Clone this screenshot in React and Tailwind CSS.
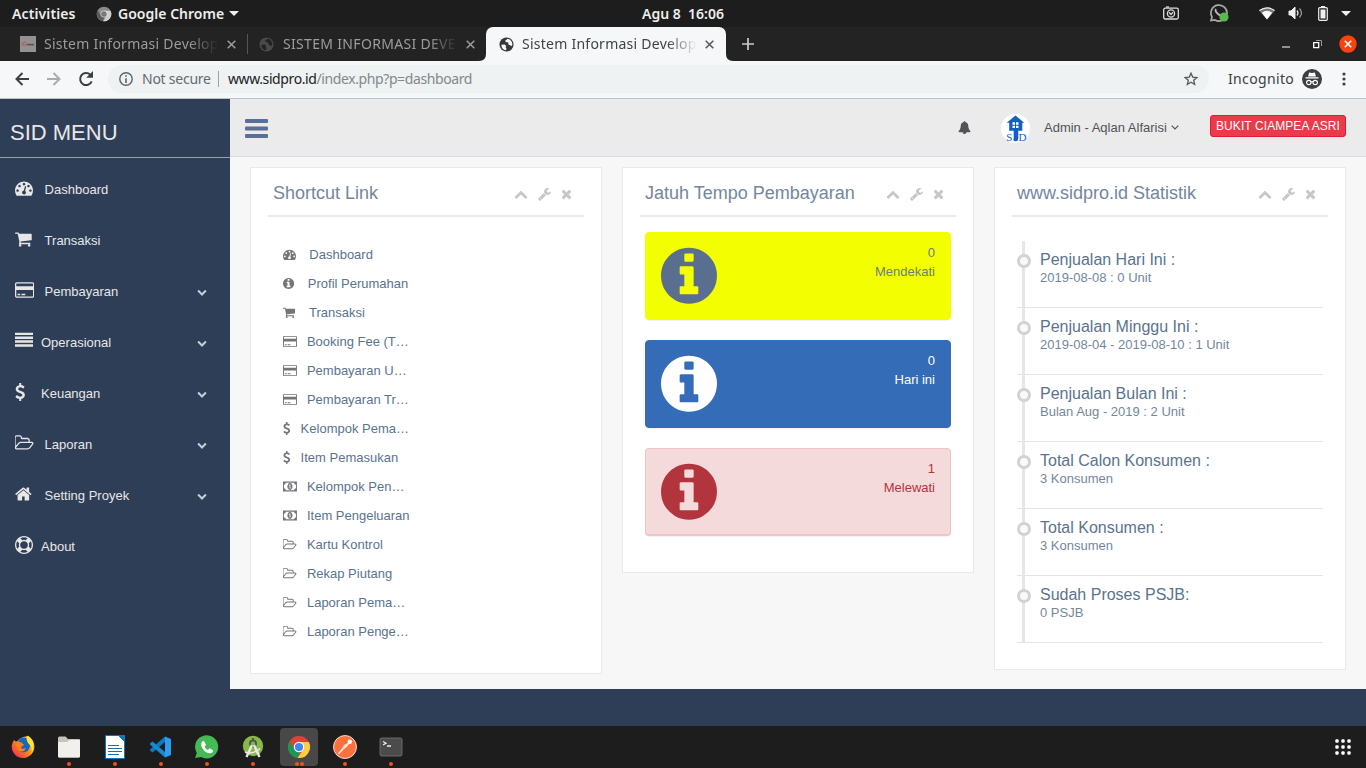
import React from "react";

const DASH = "M384 1152q0-53-37.5-90.5t-90.5-37.5-90.5 37.5-37.5 90.5 37.5 90.5 90.5 37.5 90.5-37.5 37.5-90.5zm192-448q0-53-37.5-90.5t-90.5-37.5-90.5 37.5-37.5 90.5 37.5 90.5 90.5 37.5 90.5-37.5 37.5-90.5zm428 481l101-382q6-26-7.5-48.5t-38.5-29.5-48 6.5-30 39.5l-101 382q-60 5-107 43.5t-63 98.5q-20 77 20 146t117 89 146-20 89-117q16-60-6-117t-72-91zm660-33q0-53-37.5-90.5t-90.5-37.5-90.5 37.5-37.5 90.5 37.5 90.5 90.5 37.5 90.5-37.5 37.5-90.5zm-640-640q0-53-37.5-90.5t-90.5-37.5-90.5 37.5-37.5 90.5 37.5 90.5 90.5 37.5 90.5-37.5 37.5-90.5zm448 192q0-53-37.5-90.5t-90.5-37.5-90.5 37.5-37.5 90.5 37.5 90.5 90.5 37.5 90.5-37.5 37.5-90.5zm320 448q0 261-141 483-19 29-54 29h-1402q-35 0-54-29-141-221-141-483 0-182 71-348t191-286 286-191 348-71 348 71 286 191 191 286 71 348z";
const INFO = "M1152 1376v-160q0-14-9-23t-23-9h-96v-512q0-14-9-23t-23-9h-320q-14 0-23 9t-9 23v160q0 14 9 23t23 9h96v320h-96q-14 0-23 9t-9 23v160q0 14 9 23t23 9h448q14 0 23-9t9-23zm-128-896v-160q0-14-9-23t-23-9h-192q-14 0-23 9t-9 23v160q0 14 9 23t23 9h192q14 0 23-9t9-23zm640 416q0 209-103 385.5t-279.5 279.5-385.5 103-385.5-103-279.5-279.5-103-385.5 103-385.5 279.5-279.5 385.5-103 385.5 103 279.5 279.5 103 385.5z";
const CART = "M704 1536q0 52-38 90t-90 38-90-38-38-90 38-90 90-38 90 38 38 90zm896 0q0 52-38 90t-90 38-90-38-38-90 38-90 90-38 90 38 38 90zm128-1088v512q0 24-16.5 42.5t-40.5 21.5l-1044 122q13 60 13 70 0 16-24 64h920q26 0 45 19t19 45-19 45-45 19h-1024q-26 0-45-19t-19-45q0-11 8-31.5t16-36 21.5-40 15.5-29.5l-177-823h-204q-26 0-45-19t-19-45 19-45 45-19h256q16 0 28.5 6.5t19.5 15.5 13 24.5 8 26 5.5 29.5 4.5 26h1201q26 0 45 19t19 45z";
const CARD = "M1760 128q66 0 113 47t47 113v1216q0 66-47 113t-113 47h-1600q-66 0-113-47t-47-113v-1216q0-66 47-113t113-47h1600zm-1600 128q-13 0-22.5 9.5t-9.5 22.5v224h1664v-224q0-13-9.5-22.5t-22.5-9.5h-1600zm1600 1280q13 0 22.5-9.5t9.5-22.5v-608h-1664v608q0 13 9.5 22.5t22.5 9.500h1600zm-1504-128v-128h256v128h-256zm384 0v-128h384v128h-384z";
const USD = "M1362 1185q0 153-99.5 263.5t-258.5 136.5v175q0 14-9 23t-23 9h-135q-13 0-22.5-9.5t-9.5-22.5v-175q-66-9-127.5-31t-101.5-44.5-74-48-46.5-37.5-17.5-18q-17-21-2-41l103-135q7-10 23-12 15-2 24 9l2 2q113 99 243 125 37 8 74 8 81 0 142.5-43t61.5-122q0-28-15-53t-33.5-42-58.5-37.5-66-32-80-32.5q-39-16-61.5-25t-61.5-26.5-62.5-31-56.5-35.5-53.5-42.5-43.5-49-35.5-58-21-66.5-8.5-78q0-138 98-242t255-134v-180q0-13 9.5-22.5t22.5-9.5h135q14 0 23 9t9 23v176q57 6 110.5 23t87 33.5 63.5 37.5 39 29 15 14q17 18 5 38l-81 146q-8 15-23 16-14 3-27-7-3-3-14.5-12t-39-26.5-58.5-32-74.5-26-85.5-11.5q-95 0-155 43t-60 111q0 26 8.5 48t29.5 41.5 39.5 33 56 31 60.5 27 70 27.5q53 20 81 31.5t76 35 75.5 42.5 62 50 53 63.5 31.5 76.5 13 94z";
const FOLDER = "M1717 931q0-35-53-35h-1088q-40 0-85.5 21.5t-71.5 52.5l-294 363q-18 24-18 40 0 35 53 35h1088q40 0 86-22t71-53l294-363q18-22 18-39zm-1141-163h768v-160q0-40-28-68t-68-28h-576q-40 0-68-28t-28-68v-64q0-40-28-68t-68-28h-320q-40 0-68 28t-28 68v853l256-315q44-53 116-87.5t140-34.5zm1269 163q0 62-46 120l-295 363q-43 53-116 87.5t-140 34.5h-1088q-92 0-158-66t-66-158v-960q0-92 66-158t158-66h320q92 0 158 66t66 158v32h544q92 0 158 66t66 158v160h192q54 0 99 24.5t67 70.5q15 32 15 68z";
const HOME = "M1472 992v480q0 26-19 45t-45 19h-384v-384h-256v384h-384q-26 0-45-19t-19-45v-480q0-1 .5-3t.5-3l575-474 575 474q1 2 1 6zm223-69l-62 74q-8 9-21 11h-3q-13 0-21-7l-692-577-692 577q-12 8-24 7-13-2-21-11l-62-74q-8-10-7-23.5t11-21.5l719-599q32-26 76-26t76 26l244 204v-195q0-14 9-23t23-9h192q14 0 23 9t9 23v408l219 182q10 8 11 21.5t-7 23.5z";
const RING = "M896 0q182 0 348 71t286 191 191 286 71 348-71 348-191 286-286 191-348 71-348-71-286-191-191-286-71-348 71-348 191-286 286-191 348-71zm0 128q-190 0-361 90l194 194q82-28 167-28t167 28l194-194q-171-90-361-90zm-678 1129l194-194q-28-82-28-167t28-167l-194-194q-90 171-90 361t90 361zm678 407q190 0 361-90l-194-194q-82 28-167 28t-167-28l-194 194q171 90 361 90zm0-384q159 0 271.5-112.5t112.5-271.5-112.5-271.5-271.5-112.5-271.5 112.5-112.5 271.5 112.5 271.5 271.5 112.5zm484-217l194 194q90-171 90-361t-90-361l-194 194q28 82 28 167t-28 167z";
const DOWN = "M1683 808l-742 741q-19 19-45 19t-45-19l-742-741q-19-19-19-45.5t19-45.5l166-165q19-19 45-19t45 19l531 531 531-531q19-19 45-19t45 19l166 165q19 19 19 45.5t-19 45.5z";
const UP = "M1683 1331l-166 165q-19 19-45 19t-45-19l-531-531-531 531q-19 19-45 19t-45-19l-166-165q-19-19-19-45.5t19-45.5l742-741q19-19 45-19t45 19l742 741q19 19 19 45.5t-19 45.5z";
const WRENCH = "M448 1472q0-26-19-45t-45-19-45 19-19 45 19 45 45 19 45-19 19-45zm644-420l-682 682q-37 37-90 37-52 0-91-37l-106-108q-38-36-38-90 0-53 38-91l681-681q39 98 114.5 173.5t173.5 114.5zm634-435q0 39-23 106-47 134-164.5 217.5t-258.5 83.5q-185 0-316.5-131.5t-131.5-316.5 131.5-316.5 316.5-131.5q58 0 121.5 16.5t107.5 46.5q16 11 16 28t-16 28l-293 169v224l193 107q5-3 79-48.5t135.5-81 70.5-35.5q15 0 23.5 10t8.5 25z";
const TIMES = "M1490 1322q0 40-28 68l-136 136q-28 28-68 28t-68-28l-294-294-294 294q-28 28-68 28t-68-28l-136-136q-28-28-28-68t28-68l294-294-294-294q-28-28-28-68t28-68l136-136q28-28 68-28t68 28l294 294 294-294q28-28 68-28t68 28l136 136q28 28 28 68t-28 68l-294 294 294 294q28 28 28 68z";
const BELL = "M912 1696q0-16-16-16-59 0-101.5-42.5t-42.5-101.5q0-16-16-16t-16 16q0 73 51.5 124.5t124.5 51.5q16 0 16-16zm816-288q0 52-38 90t-90 38h-448q0 106-75 181t-181 75-181-75-75-181h-448q-52 0-90-38t-38-90q50-42 91-88t85-119.5 74.5-158.5 50-206 19.5-260q0-152 117-282.5t307-158.5q-8-19-8-39 0-40 28-68t68-28 68 28 28 68q0 20-8 39 190 28 307 158.5t117 282.5q0 139 19.5 260t50 206 74.5 158.5 85 119.5 91 88z";
const JUSTIFY = "M0 1216h1792v240H0zM0 832h1792v240H0zM0 448h1792v240H0zM0 64h1792v240H0z";
const MONEY = "M0 200h1920v1392H0zM384 384q0 106-75 181t-181 75v512q106 0 181 75t75 181h1152q0-106 75-181t181-75V640q-106 0-181-75t-75-181zM960 420q190 0 275 185t85 291-85 291-275 185-275-185-85-291 85-291 275-185zM790 1152h340v-100h-110V608h-100l-130 117 60 80 60-46v293H790z";

const icons = {
  dash: [DASH, "0 0 1792 1792"],
  info: [INFO, "128 0 1536 1792"],
  cart: [CART, "64 0 1664 1792"],
  card: [CARD, "0 0 1920 1792"],
  usd: [USD, "384 0 1024 1792"],
  folder: [FOLDER, "0 0 1920 1792"],
  home: [HOME, "64 0 1664 1792"],
  ring: [RING, "0 0 1792 1792"],
  justify: [JUSTIFY, "0 0 1792 1792"],
  money: [MONEY, "0 0 1920 1792"],
  down: [DOWN, "0 0 1792 1792"],
  up: [UP, "0 0 1792 1792"],
  wrench: [WRENCH, "64 0 1664 1792"],
  times: [TIMES, "192 0 1408 1792"],
  bell: [BELL, "0 0 1792 1792"],
};

function Icon({ name, className }) {
  const [d, box] = icons[name];
  return (
    <svg viewBox={box} className={`w-auto shrink-0 ${className}`} fill="currentColor" fillRule="evenodd">
      <path d={d} />
    </svg>
  );
}

/* ---------- desktop top bar ---------- */

function Chrome({ gray }) {
  const c = gray ? ["#8a8a8a", "#5c5c5c", "#cfcfcf", "#777"] : ["#db4437", "#0f9d58", "#ffcd40", "#4285f4"];
  return (
    <svg viewBox="0 0 24 24" className="size-full">
      <circle cx="12" cy="12" r="11" fill={c[0]} />
      <path d="M2.500 6.500 7.500 14.600 12 17 11 22.960A11 11 0 0 1 2.500 6.500z" fill={c[1]} />
      <path d="M12 7h9.800A11 11 0 0 1 10.500 22.900L16.300 14.500z" fill={c[2]} />
      <circle cx="12" cy="12" r="5.200" fill="#fff" opacity={gray ? 0.6 : 1} />
      <circle cx="12" cy="12" r="4.100" fill={c[3]} />
    </svg>
  );
}

function TopBar() {
  return (
    <div className="flex h-[27px] items-center bg-[#1d1d1d] text-[14px] font-semibold text-[#eeeeec]">
      <div className="ml-3 w-[84px] tracking-[0.12px]">Activities</div>
      <div className="size-4 shrink-0"><Chrome gray /></div>
      <div className="ml-[6px] w-[108px] whitespace-nowrap tracking-[0.02px]">Google Chrome</div>
      <svg width="10" height="5" className="ml-[3px]"><path d="M0 0h10L5 5z" fill="#eee" /></svg>
      <div className="ml-[403px] w-[84px] whitespace-pre">{"Agu 8  16:06"}</div>
      <svg width="16" height="14" className="mb-[2px] ml-[437px] shrink-0" fill="none" stroke="#ddd" strokeWidth="1.300">
        <rect x=".7" y="2.200" width="14.600" height="10.800" rx="1.500" /><path d="M3 1h3" /><circle cx="8" cy="7.500" r="3.600" /><path d="M6 6.300 8 8.500l2-2.200" />
      </svg>
      <svg width="20" height="20" viewBox="0 0 20 20" className="mb-px ml-[30px] shrink-0" fill="none">
        <path d="M2 17.500 3 14a8 8 0 1 1 3 3z" stroke="#aaa" strokeWidth="1.700" /><path d="M7 6q-1.500 2 2 5t5 1.200" stroke="#bbb" strokeWidth="1.800" /><circle cx="15" cy="14" r="4.600" fill="#57b94e" />
      </svg>
      <svg width="16" height="13" className="mb-px ml-[30px] shrink-0"><path d="M0 3.500Q8-2.500 16 3.500L8 12.500z" fill="#777" /><path d="M2.800 5.700Q8 2 13.200 5.700L8 12.500z" fill="#fff" /><path d="M.5 3.500Q8-1.800 15.500 3.500" stroke="#eee" strokeWidth="1.200" fill="none" /></svg>
      <svg width="16" height="14" className="mb-px ml-[13px] shrink-0" fill="none" stroke="#ddd" strokeWidth="1.300"><path d="M1 5h2l4-4v12L3 9H1z" fill="#eee" stroke="#eee" strokeWidth="1" /><path d="M9 4.500q2 2.500 0 5" /><path d="M11.500 2.500q4 4.500 0 9" stroke="#999" /></svg>
      <svg width="10" height="15" className="mb-px ml-[14px] shrink-0"><path d="M3 0h4v2H3z" fill="#eee" /><rect x=".700" y="1.700" width="8.600" height="12.600" rx="1" fill="none" stroke="#eee" strokeWidth="1.200" /><path d="M2.500 3.500h5v9h-5z" fill="#eee" /></svg>
      <svg width="10" height="5" className="ml-[13px] shrink-0"><path d="M0 0h10L5 5z" fill="#eee" /></svg>
    </div>
  );
}

/* ---------- browser ---------- */

function Globe({ color, ground }) {
  return (
    <svg viewBox="0 0 16 16" className="size-[15px] shrink-0">
      <circle cx="8" cy="8" r="7.500" fill={color} />
      <path d="M2.500 8.200 6 8l1.800 1.500-.8 1.500 1 1.200-.6 2A6.200 6.200 0 0 1 2.500 8.200zM9.300 1.900 6.500 4l1 1.600 2.300.1.200 2.200 2 .8.900 1.200 1.300-1.300A6.200 6.200 0 0 0 9.300 1.900z" fill={ground} />
    </svg>
  );
}

function Close({ className }) {
  return (
    <svg width="9" height="9" className={`shrink-0 ${className}`} fill="none" stroke="currentColor" strokeWidth="1.500">
      <path d="m.7.7 7.600 7.600M8.300.7.7 8.300" />
    </svg>
  );
}

function TabStrip() {
  return (
    <div className="flex h-[34px] items-center bg-[#232323] text-[14px] text-[#9d9d9d]">
      <svg width="16" height="16" className="ml-5 shrink-0"><path d="M0 0h16v16H0z" fill="#929292" /><path d="M2 9h12M2 8.500Q4 4 6.500 7.500" stroke="#b65b55" fill="none" strokeWidth="1.200" /><path d="M7 8.500h7" stroke="#555" strokeWidth="1.500" /></svg>
      <div className="mb-[2px] ml-2 w-[174px] overflow-hidden whitespace-nowrap tracking-[0.25px] [mask-image:linear-gradient(to_right,black_83%,transparent)]">Sistem Informasi Develop</div>
      <Close className="ml-[9px]" />
      <div className="ml-[11px] h-5 w-px bg-[#555]" />
      <div className="ml-[11px] flex"><Globe color="#4a4a4a" ground="#232323" /></div>
      <div className="mb-[2px] ml-[9px] w-[175px] overflow-hidden whitespace-nowrap tracking-[0.32px] [mask-image:linear-gradient(to_right,black_83%,transparent)]">SISTEM INFORMASI DEVE</div>
      <Close className="ml-[8px]" />
      <div className="relative ml-[11px] flex h-[34px] w-[240px] items-center rounded-t-[7px] bg-[#f5f7f8] text-[#3f4347]">
        <svg width="254" height="7" className="absolute bottom-0 -left-[7px]" fill="#f5f7f8"><path d="M0 7Q7 7 7 0V7zM254 7q-7 0-7-7v7z" /></svg>
        <div className="ml-[13px] flex"><Globe color="#35373a" ground="#f5f7f8" /></div>
        <div className="mb-[2px] ml-[8px] w-[175px] overflow-hidden whitespace-nowrap tracking-[0.25px] [mask-image:linear-gradient(to_right,black_83%,transparent)]">Sistem Informasi Develop</div>
        <Close className="ml-[8px] text-[#555]" />
      </div>
      <svg width="12" height="12" className="ml-4 shrink-0" stroke="#ccc" strokeWidth="1.700"><path d="M6 0v12M0 6h12" /></svg>
      <svg width="8" height="2" className="mt-[5px] ml-[528px] shrink-0"><path d="M0 .5h8v1H0z" fill="#fff" /></svg>
      <svg width="9" height="9" className="ml-[23px] shrink-0" fill="none"><path d="M3 .5h5.500V6" stroke="#999" /><path d="M.7 2.700h5v5h-5z" stroke="#fff" strokeWidth="1.300" /></svg>
      <svg width="18" height="18" className="ml-[17px] shrink-0"><circle cx="9" cy="9" r="8.700" fill="#f9420e" /><path d="m5.800 5.800 6.400 6.400m0-6.400-6.400 6.400" stroke="#fff" strokeWidth="1.600" /></svg>
    </div>
  );
}

function AddressBar() {
  return (
    <div className="flex h-[38px] items-center border-b border-[#bcc3cb] bg-[#f5f7f8] pb-[2px]">
      <svg width="14" height="14" className="ml-[15px] shrink-0" fill="none" stroke="#3c4043" strokeWidth="2"><path d="M14 7H1.500M7.500 1l-6 6 6 6" /></svg>
      <svg width="14" height="14" className="ml-[18px] shrink-0" fill="none" stroke="#a9abad" strokeWidth="2"><path d="M0 7h12.500M6.500 1l6 6-6 6" /></svg>
      <svg width="16" height="16" viewBox="0 0 16 16" className="ml-[17px] shrink-0" fill="none"><path d="M13.700 10.300A6 6 0 1 1 12.300 3.700L13.500 5" stroke="#3c4043" strokeWidth="2" /><path d="M15 0v6.800H8.200z" fill="#3c4043" /></svg>
      <div className="ml-[14px] flex h-7 w-[1101px] items-center rounded-full bg-[#eef2f3] text-[14px]">
        <svg width="14" height="14" className="ml-[11px] shrink-0"><circle cx="7" cy="7" r="6.200" fill="none" stroke="#5f6368" strokeWidth="1.400" /><path d="M6.200 6.200h1.600V11H6.200zM6.200 3.300h1.600v1.500H6.200z" fill="#5f6368" /></svg>
        <div className="ml-[9px] w-[69px] whitespace-nowrap tracking-[-0.25px] text-[#666a6e]">Not secure</div>
        <div className="ml-[7px] h-4 w-px bg-[#a0a4a8]" />
        <div className="ml-[9px] w-[250px] whitespace-nowrap tracking-[-0.4px] text-[#84888b]"><span className="text-[#202124]">www.sidpro.id</span>/index.php?p=dashboard</div>
        <svg width="14" height="14" viewBox="0 0 14 14" className="mr-[11px] ml-auto shrink-0" fill="none" stroke="#55595d" strokeWidth="1.300"><path d="m7 1.200 1.700 3.900 4.200.4-3.200 2.800 1 4.200L7 10.300l-3.700 2.200 1-4.200L1.100 5.500l4.200-.4z" /></svg>
      </div>
      <div className="ml-[19px] w-[66px] text-[14px] tracking-[0.35px] text-[#3c4043]">Incognito</div>
      <svg width="20" height="20" viewBox="0 0 20 20" className="ml-[8px] shrink-0"><circle cx="10" cy="10" r="10" fill="#3c4043" /><path d="M3.500 8.300h13v1.300h-13zM6 7.500l1.200-4q2.800.8 5.600 0l1.200 4z" fill="#fff" /><g fill="none" stroke="#fff" strokeWidth="1.200"><circle cx="6.800" cy="13.500" r="2.200" /><circle cx="13.200" cy="13.500" r="2.200" /><path d="M9 13q1-.6 2 0" /></g></svg>
      <svg width="4" height="14" className="ml-[20px] shrink-0" fill="#3c4043"><circle cx="2" cy="2" r="1.600" /><circle cx="2" cy="7" r="1.600" /><circle cx="2" cy="12" r="1.600" /></svg>
    </div>
  );
}

/* ---------- page ---------- */

const menu = [
  ["dash", "Dashboard", true, false],
  ["cart", "Transaksi", true, false],
  ["card", "Pembayaran", true, true],
  ["justify", "Operasional", false, true],
  ["usd", "Keuangan", false, true],
  ["folder", "Laporan", true, true],
  ["home", "Setting Proyek", true, true],
  ["ring", "About", false, false],
];

function Sidebar() {
  return (
    <aside className="w-[230px] shrink-0 text-[#e7e7e7]">
      <div className="flex h-[59px] items-center border-b border-[#9a9fa9] pt-[9px] pl-[10px] text-[22px]">SID MENU</div>
      <nav className="pt-[6px]">
        {menu.map(([icon, label, wide, arrow]) => (
          <div key={label} className="flex h-[51px] items-center pl-[15px] text-[13px]">
            <span className="flex w-[26px]"><Icon name={icon} className="mb-[3px] h-[18px]" /></span>
            <span className={wide ? "ml-[3.600px]" : ""}>{label}</span>
            {arrow && <Icon name="down" className="mr-[23px] ml-auto h-[10px] text-[#c4cfda]" />}
          </div>
        ))}
      </nav>
    </aside>
  );
}

function Header() {
  return (
    <header className="flex h-[58px] items-center border-b border-[#d9dee4] bg-[#ebebeb]">
      <svg width="23" height="19" className="mt-px ml-[15px] shrink-0" fill="#5a6f94"><rect width="23" height="4" rx="1" /><rect y="7.500" width="23" height="4" rx="1" /><rect y="15" width="23" height="4" rx="1" /></svg>
      <Icon name="bell" className="ml-[690px] h-[13px] text-[#515356]" />
      <svg width="29" height="29" viewBox="0 0 29 29" className="mt-px ml-[30px] shrink-0">
        <circle cx="14.500" cy="14.500" r="14.500" fill="#fff" />
        <path d="M14.500 1.500 23.300 8.800h-2v8h-4v8q0 2.500-2.800 2.500t-1.800-2.500v-8H8.200v-8h-2.500z" fill="#1560bd" />
        <path d="M11.500 8.300h2.500v2.500h-2.500zM15 8.300h2.500v2.500H15zM11.500 11.800h2.500v2.300h-2.500zM15 11.800h2.500v2.300H15z" fill="#fff" />
        <text x="5.300" y="27" fontSize="11" fontFamily="Liberation Serif, serif" fill="#1560bd">S</text>
        <text x="17.500" y="27" fontSize="11" fontFamily="Liberation Serif, serif" fill="#1560bd">D</text>
      </svg>
      <span className="ml-[14px] text-[13px] whitespace-nowrap text-[#515356]">Admin - Aqlan Alfarisi</span>
      <svg width="8" height="5" className="ml-1 shrink-0" fill="none" stroke="#515356" strokeWidth="1.200"><path d="m.7.7 3.300 3.300L7.300.7" /></svg>
      <span className="mr-5 mb-[3px] ml-auto flex h-[22px] w-[136px] items-center justify-center rounded-[3px] border border-[#e3192f] bg-[#e93b49] text-[12px] tracking-[0.08px] whitespace-nowrap text-white">BUKIT CIAMPEA ASRI</span>
    </header>
  );
}

function Panel({ title, className, children }) {
  return (
    <section className={`w-[352px] shrink-0 border border-[#e6e9ed] bg-white px-[17px] ${className}`}>
      <div className="flex h-[49px] items-center border-b-2 border-[#e6e9ed] pt-[3px] pr-[12px] pl-[5px] text-[18px] text-[#73879c]">
        <span className="whitespace-nowrap">{title}</span>
        <span className="mt-[2px] ml-auto flex items-center text-[#c5c7cb]">
          <Icon name="up" className="h-[14px]" />
          <Icon name="wrench" className="ml-[10px] h-[14px]" />
          <Icon name="times" className="ml-[10px] h-[14px]" />
        </span>
      </div>
      {children}
    </section>
  );
}

const links = [
  ["dash", "Dashboard", "ml-[13.300px]"],
  ["info", "Profil Perumahan", "ml-[13.700px]"],
  ["cart", "Transaksi", "ml-[13.900px]"],
  ["card", "Booking Fee (T…", "ml-[10px]"],
  ["card", "Pembayaran U…", "ml-[10px]"],
  ["card", "Pembayaran Tr…", "ml-[10px]"],
  ["usd", "Kelompok Pema…", "ml-[10.200px]"],
  ["usd", "Item Pemasukan", "ml-[10.200px]"],
  ["money", "Kelompok Pen…", "ml-[10px]"],
  ["money", "Item Pengeluaran", "ml-[10px]"],
  ["folder", "Kartu Kontrol", "ml-[10px]"],
  ["folder", "Rekap Piutang", "ml-[10px]"],
  ["folder", "Laporan Pema…", "ml-[10px]"],
  ["folder", "Laporan Penge…", "ml-[10px]"],
];

const alerts = [
  ["0", "Mendekati", "bg-[#f3ff00] border-[#f3ff00] text-[#6d7c83]", "text-[#5a6f90]"],
  ["0", "Hari ini", "bg-[#346cb7] border-[#346cb7] text-white", "text-white"],
  ["1", "Melewati", "bg-[#f5dadc] border-[#efc4cb] border-b-2 text-[#b2353d]", "text-[#b2353d]"],
];

const stats = [
  ["Penjualan Hari Ini :", "2019-08-08 : 0 Unit"],
  ["Penjualan Minggu Ini :", "2019-08-04 - 2019-08-10 : 1 Unit"],
  ["Penjualan Bulan Ini :", "Bulan Aug - 2019 : 2 Unit"],
  ["Total Calon Konsumen :", "3 Konsumen"],
  ["Total Konsumen :", "3 Konsumen"],
  ["Sudah Proses PSJB:", "0 PSJB"],
];

function Content() {
  return (
    <main className="flex h-[532px] items-start gap-5 bg-[#f7f7f7] pt-[10px] pl-5">
      <Panel title="Shortcut Link" className="h-[507px]">
        <ul className="pt-[23px] pl-[15px] text-[13px] text-[#5a738e]">
          {links.map(([icon, label, gap], i) => (
            <li key={i} className="flex h-[29px] items-center">
              <Icon name={icon} className="h-[13px] text-[#73757a]" />
              <span className={`whitespace-nowrap ${gap}`}>{label}</span>
            </li>
          ))}
        </ul>
      </Panel>
      <Panel title="Jatuh Tempo Pembayaran" className="h-[406px]">
        <div className="flex flex-col gap-5 px-[5px] pt-[15px]">
          {alerts.map(([n, label, box, color]) => (
            <div key={label} className={`flex h-[88px] justify-between rounded-[4px] border px-[15px] shadow-[0_1px_1px_rgba(0,0,0,0.05)] ${box}`}>
              <Icon name="info" className={`mt-[10px] h-[65.300px] ${color}`} />
              <div className="pt-[10px] text-right text-[13px] leading-[19px]">
                <div>{n}</div>
                <div>{label}</div>
              </div>
            </div>
          ))}
        </div>
      </Panel>
      <Panel title="www.sidpro.id Statistik" className="h-[503px]">
        <div className="relative mt-6 ml-[5px] w-[306px]">
          <ul>
            {stats.map(([a, b]) => (
              <li key={a} className="h-[67px] border-b border-[#e4e4e4] pt-[9px] pl-[23px] whitespace-nowrap">
                <div className="text-[16px] leading-[19px] text-[#5a738e]">{a}</div>
                <div className="text-[13px] leading-[17px] text-[#73879c]">{b}</div>
              </li>
            ))}
          </ul>
          <div className="absolute top-0 left-[5px] h-full w-[3px] bg-[#e6e6e6]" />
          <div className="absolute top-[13px] left-0 flex flex-col gap-[53px]">
            {stats.map(([a]) => (
              <span key={a} className="size-[14px] rounded-full border-[3px] border-[#d2d2d2] bg-[#f9f9f9]" />
            ))}
          </div>
        </div>
      </Panel>
    </main>
  );
}

/* ---------- dock ---------- */

const apps = [
  { dots: 0, art: <><defs><linearGradient id="fx" x1="1" y1="0" x2="0" y2="1"><stop stopColor="#ffe02a" /><stop offset=".5" stopColor="#ff8a16" /><stop offset="1" stopColor="#f5156c" /></linearGradient></defs><path d="M3 5q1 1.500 3 1.500 2-3 6-4.500l5-1q5 3 6 8a11.300 11.300 0 1 1-20-4z" fill="url(#fx)" /><path d="M7 6Q11 .5 16 3.500q3 3 3 7-1 7-7 7-6-1-6-6l3-2 4 .5-3-2z" fill="#1467c9" /><path d="M5 9l5-2 3 3-3 2 1 2 4-1q-2 5-7 3-3-2-3-7z" fill="#ff8218" /><path d="M16.500.5q7 4 6 13l-2 6q1-8-3-11-3-4-1-8z" fill="#ffe82f" /></> },
  { dots: 1, art: <><path d="M1 3q0-1.500 1.500-1.500h6L11 4h11q1 0 1 1v16q0 1.500-1.500 1.500h-19Q1 22.500 1 21z" fill="#c9c3b4" /><path d="M1 7h9l2.500-2H23v16q0 1.500-1.500 1.500h-19Q1 22.500 1 21z" fill="#f1f0ed" /></> },
  { dots: 1, art: <><path d="M2.500.5h13l6 6v17h-19z" fill="#fff" stroke="#0b7ab8" strokeWidth="1" /><path d="M15.500 0H22v6.500z" fill="#0b7ab8" /><path d="M5 10.500h11M5 13.500h14M5 16.500h14M5 19.500h11" stroke="#1571a8" /></> },
  { dots: 1, art: <><path d="M16 1.500v5.500L3.500 17.500 1 15.500v-1z" fill="#0e79bd" /><path d="M16 22.500V17L3.500 6.500 1 8.500v1z" fill="#1689cf" /><path d="m16 1.500 6 2.500v16l-6 2.500z" fill="#2a9df0" /></> },
  { dots: 1, art: <><path d="M0 23 1.800 18A11.600 11.600 0 1 1 6 22z" fill="#45b955" /><path d="M7 6.500 9 6l2 4-1.500 1.500q1 2.500 3.500 3.500l1.500-1.800 3.500 2q0 3-3 3-4 0-7-4-3-4-1-7.700z" fill="#fff" /></> },
  { dots: 1, art: <><circle cx="12" cy="11" r="10.200" fill="#89b944" /><circle cx="12" cy="8.500" r="3" fill="#89b944" stroke="#4e5a58" strokeWidth="2" /><path d="M12 3v3" stroke="#4e5a58" strokeWidth="2" /><path d="m11 10-5.500 12M13 10l5.500 12" stroke="#e9e9e9" strokeWidth="2.400" /><path d="M4 17q8 3 15-3.500" stroke="#e9e9e9" strokeWidth="1.500" fill="none" /></> },
  { dots: 2, active: true },
  { dots: 1, art: <><circle cx="12" cy="12" r="11.500" fill="#ff713c" stroke="#fff" strokeWidth=".8" /><path d="M15.500 8.500 9 15l-3.500 3.800" stroke="#fff" strokeWidth="1.300" fill="none" /><path d="m8 15 3-5 4-2 .8 1.300-3 3.700z" fill="#ffe2d4" /><circle cx="16.800" cy="6.800" r="2.200" fill="#fff" /></> },
  { dots: 1, art: <><rect x="1" y="3" width="22" height="18" rx="1.500" fill="#4b4b4b" stroke="#777" strokeWidth=".8" /><path d="m4 6.500 3 1.700-3 1.800M8 11h4" stroke="#eee" strokeWidth="1.300" fill="none" /></> },
];

function Dock() {
  return (
    <footer className="flex h-[42px] items-center justify-between bg-[#1d1d1d] pr-[15px] pl-1">
      <div className="flex gap-2">
        {apps.map((app, i) => (
          <div key={i} className={`relative flex h-[38px] w-[38px] items-center justify-center rounded-[4px] ${app.active ? "bg-[#484848]" : ""}`}>
            <div className="size-6">{app.active ? <Chrome /> : <svg viewBox="0 0 24 24" className="size-full">{app.art}</svg>}</div>
            <div className="absolute bottom-0 flex h-[4px] gap-px">
              {Array.from({ length: app.dots }, (_, k) => <span key={k} className="size-[4px] rounded-full bg-[#e9541f]" />)}
            </div>
          </div>
        ))}
      </div>
      <svg width="16" height="16" fill="#fff">
        {[2, 8, 14].map((y) => [2, 8, 14].map((x) => <rect key={`${x}-${y}`} x={x - 1.700} y={y - 1.700} width="3.400" height="3.400" rx="1.200" />))}
      </svg>
    </footer>
  );
}

export default function App() {
  return (
    <div className="flex h-[768px] w-[1366px] flex-col overflow-hidden bg-[#2f3e57]">
      <div className="shrink-0 font-['Noto_Sans',sans-serif]">
        <TopBar />
        <TabStrip />
        <AddressBar />
      </div>
      <div className="flex h-[627px] shrink-0 font-['Liberation_Sans',Arial,sans-serif]">
        <Sidebar />
        <div className="w-[1136px]">
          <Header />
          <Content />
        </div>
      </div>
      <Dock />
    </div>
  );
}
